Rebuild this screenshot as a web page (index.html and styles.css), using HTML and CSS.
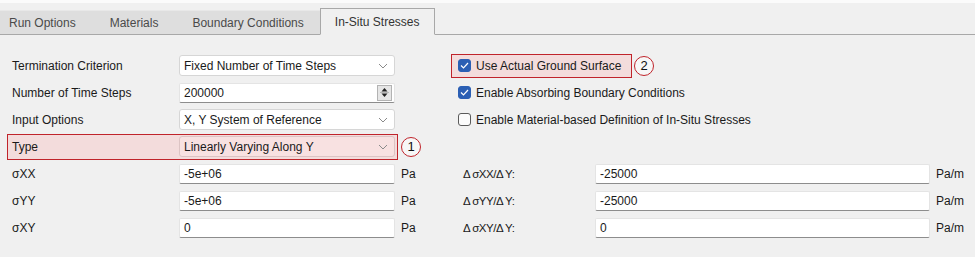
FILE: index.html
```html
<!DOCTYPE html>
<html>
<head>
<meta charset="utf-8">
<link rel="stylesheet" href="styles.css">
</head>
<body>
<div class="top-strip"></div>
<div class="tabbar">
  <div class="tab first">Run Options</div>
  <div class="tab">Materials</div>
  <div class="tab">Boundary Conditions</div>
  <div class="tab active">In-Situ Stresses</div>
  <div class="tab-fill"></div>
</div>
<div class="panel">
  <div class="col left">
    <div class="row">
      <span class="label">Termination Criterion</span>
      <div class="select"><span>Fixed Number of Time Steps</span><svg class="chev" width="10" height="6" viewBox="0 0 10 6"><polyline points="1,1 5,5 9,1" fill="none" stroke="#8a8a8a" stroke-width="1"/></svg></div>
    </div>
    <div class="row">
      <span class="label">Number of Time Steps</span>
      <div class="input spin"><span>200000</span>
        <div class="spinbox"><svg width="9" height="13" viewBox="0 0 9 13"><polygon points="4.5,2 7.5,5.5 1.5,5.5" fill="#222"/><line x1="0" y1="6.5" x2="9" y2="6.5" stroke="#b8b8b8"/><polygon points="1.5,7.5 7.5,7.5 4.5,11" fill="#222"/></svg></div>
      </div>
    </div>
    <div class="row">
      <span class="label">Input Options</span>
      <div class="select"><span>X, Y System of Reference</span><svg class="chev" width="10" height="6" viewBox="0 0 10 6"><polyline points="1,1 5,5 9,1" fill="none" stroke="#8a8a8a" stroke-width="1"/></svg></div>
    </div>
    <div class="row">
      <div class="hl hl-type">
        <span class="label">Type</span>
        <div class="select pink"><span>Linearly Varying Along Y</span><svg class="chev" width="10" height="6" viewBox="0 0 10 6"><polyline points="1,1 5,5 9,1" fill="none" stroke="#8a8a8a" stroke-width="1"/></svg></div>
      </div>
      <span class="badge b1">1</span>
    </div>
    <div class="row">
      <span class="label">σXX</span>
      <div class="input"><span>-5e+06</span></div>
      <span class="unit">Pa</span>
    </div>
    <div class="row">
      <span class="label">σYY</span>
      <div class="input"><span>-5e+06</span></div>
      <span class="unit">Pa</span>
    </div>
    <div class="row">
      <span class="label">σXY</span>
      <div class="input"><span>0</span></div>
      <span class="unit">Pa</span>
    </div>
  </div>
  <div class="col right">
    <div class="row">
      <div class="hl hl-check">
        <span class="cb checked"><svg width="9" height="7" viewBox="0 0 9 7"><polyline points="1,3.5 3.5,6 8,1" fill="none" stroke="#fff" stroke-width="1.2"/></svg></span>
        <span class="cb-text">Use Actual Ground Surface</span>
      </div>
      <span class="badge b2">2</span>
    </div>
    <div class="row cbrow">
      <span class="cb checked"><svg width="9" height="7" viewBox="0 0 9 7"><polyline points="1,3.5 3.5,6 8,1" fill="none" stroke="#fff" stroke-width="1.2"/></svg></span>
      <span class="cb-text">Enable Absorbing Boundary Conditions</span>
    </div>
    <div class="row cbrow">
      <span class="cb"></span>
      <span class="cb-text">Enable Material-based Definition of In-Situ Stresses</span>
    </div>
    <div class="row"></div>
    <div class="row drow">
      <span class="dlabel">Δ σXX/Δ Y:</span>
      <div class="input wide"><span>-25000</span></div>
      <span class="unit">Pa/m</span>
    </div>
    <div class="row drow">
      <span class="dlabel">Δ σYY/Δ Y:</span>
      <div class="input wide"><span>-25000</span></div>
      <span class="unit">Pa/m</span>
    </div>
    <div class="row drow">
      <span class="dlabel">Δ σXY/Δ Y:</span>
      <div class="input wide"><span>0</span></div>
      <span class="unit">Pa/m</span>
    </div>
  </div>
</div>
</body>
</html>
```
FILE: styles.css
```css
* { box-sizing: border-box; }
html, body {
  margin: 0;
  padding: 0;
  width: 975px;
  height: 257px;
  overflow: hidden;
  background: #f0f0f0;
  font-family: "Liberation Sans", Arial, sans-serif;
  font-size: 12px;
  color: #1a1a1a;
}
.top-strip {
  height: 3px;
  background: #fbfbfb;
}
.tabbar {
  display: flex;
  align-items: flex-end;
  height: 32px;
}
.tab {
  height: 25px;
  line-height: 24px;
  padding: 0 16px 0 18px;
  background: #dedede;
  color: #4a4a4a;
  border-top: 1px solid #e8e8e8;
  border-bottom: 1px solid #a8a8a8;
  white-space: nowrap;
}
.tab.first { padding-left: 9px; padding-right: 16px; }
.tab.active {
  height: 27px;
  line-height: 26px;
  background: #f0f0f0;
  border: 1px solid #a8a8a8;
  border-bottom: 1px solid #f0f0f0;
  padding: 0 14px 0 14px;
  color: #333;
}
.tab-fill {
  flex: 1;
  border-bottom: 1px solid #a8a8a8;
}
.panel {
  display: flex;
  padding-top: 17px;
}
.col { display: flex; flex-direction: column; }
.left { width: 451px; padding-left: 12px; }
.right { flex: 1; }
.row {
  height: 27px;
  display: flex;
  align-items: center;
}
.label {
  width: 167px;
  flex: none;
}
.select {
  width: 216px;
  height: 21px;
  background: #fff;
  border: 1px solid #d6d6d6;
  border-radius: 3px;
  display: flex;
  align-items: center;
  justify-content: space-between;
  padding: 0 6px 0 4px;
}
.select.pink {
  background: #f8e1e1;
  border-color: #dcc4c4;
}
.chev { margin-top: 1px; }
.input {
  width: 216px;
  height: 20px;
  background: #fff;
  border: 1px solid #e4e4e4;
  border-bottom: 1px solid #8d8d8d;
  border-radius: 2px;
  display: flex;
  align-items: center;
  padding: 0 4px;
}
.input.spin {
  justify-content: space-between;
  padding-right: 2px;
}
.spinbox {
  width: 15px;
  height: 16px;
  background: #e6e6e6;
  border: 1px solid #b3b3b3;
  display: flex;
  align-items: center;
  justify-content: center;
}
.unit { margin-left: 6px; }
.hl {
  display: flex;
  align-items: center;
  border: 1.5px solid #c0242b;
  background: #f3dcdc;
}
.hl-type {
  height: 26px;
  margin-left: -5px;
  padding-left: 4px;
  width: 391px;
}
.badge {
  width: 20px;
  height: 20px;
  border: 1.5px solid #c0242b;
  border-radius: 50%;
  display: flex;
  align-items: center;
  justify-content: center;
  font-size: 13px;
  color: #111;
  background: #f7f7f7;
}
.b1 { margin-left: 3px; }
.hl-check {
  height: 24px;
  width: 181px;
  padding-left: 6px;
}
.b2 { margin-left: 2px; }
.cb {
  width: 13px;
  height: 13px;
  border: 1px solid #5a5a5a;
  border-radius: 3px;
  background: #fbfbfb;
  display: flex;
  align-items: center;
  justify-content: center;
  flex: none;
}
.cb.checked {
  background: #2b5fb4;
  border-color: #2b5fb4;
}
.cb-text { margin-left: 5px; white-space: nowrap; }
.cbrow { padding-left: 7px; }
.drow { padding-left: 12px; }
.dlabel {
  width: 132px;
  flex: none;
  font-size: 11.5px;
  letter-spacing: -0.5px;
}
.input.wide { width: 335px; }
```
